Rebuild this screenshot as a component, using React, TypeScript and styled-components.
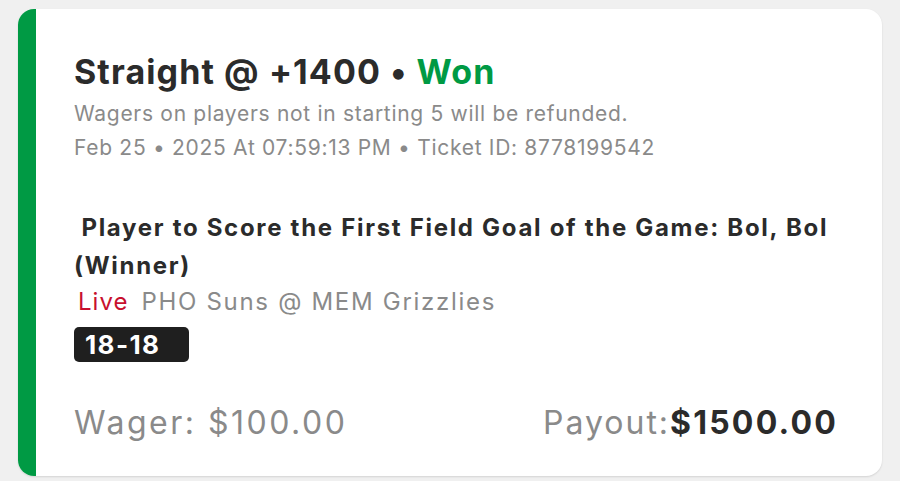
import React from "react";
import styled, { createGlobalStyle } from "styled-components";

const GlobalStyle = createGlobalStyle`
  html, body {
    margin: 0;
    padding: 0;
    background: #f0f0f0;
  }
  body {
    font-family: Inter, Roboto, "Liberation Sans", sans-serif;
  }
`;

const Page = styled.div`
  width: 900px;
  height: 481px;
  box-sizing: border-box;
  padding: 9px 18px 5px 18px;
  display: flex;
`;

const Card = styled.div`
  flex: 1;
  display: flex;
  background: #fff;
  border-radius: 16px;
  overflow: hidden;
  box-shadow: 0 1px 2px rgba(0, 0, 0, 0.12);
`;

const Stripe = styled.div`
  width: 18px;
  background: #009a44;
  flex-shrink: 0;
`;

const Body = styled.div`
  flex: 1;
  display: flex;
  flex-direction: column;
  padding: 43px 46px 0 38px;
`;

const Title = styled.h1`
  margin: 0;
  font-size: 34px;
  line-height: 40px;
  font-weight: 700;
  letter-spacing: 1.1px;
  color: #2b2b2b;
`;

const Won = styled.span`
  color: #009a44;
`;

const Meta = styled.div<{ $gap?: number }>`
  margin-top: ${(p) => p.$gap ?? 0}px;
  font-size: 21px;
  line-height: 34px;
  letter-spacing: 0.7px;
  color: #8a8a8a;
`;

const Market = styled.div`
  margin-top: 44px;
  font-size: 24px;
  line-height: 38px;
  font-weight: 700;
  letter-spacing: 1.7px;
  color: #2b2b2b;
  white-space: pre-wrap;
`;

const Event = styled.div`
  font-size: 24px;
  line-height: 34px;
  letter-spacing: 1.7px;
  color: #8a8a8a;
  padding-left: 4px;
`;

const LiveTag = styled.span`
  color: #c8102e;
  letter-spacing: 1px;
  margin-right: 13px;
`;

const Score = styled.div`
  align-self: flex-start;
  margin-top: 8px;
  width: 115px;
  height: 35px;
  box-sizing: border-box;
  padding: 0 11px;
  border-radius: 5px;
  background: #1f1f1f;
  color: #fff;
  font-size: 26px;
  font-weight: 700;
  letter-spacing: 1.4px;
  line-height: 35px;
`;

const Footer = styled.div`
  margin-top: 41px;
  display: flex;
  justify-content: space-between;
  align-items: baseline;
  font-size: 32px;
  line-height: 40px;
  letter-spacing: 2.5px;
  color: #8a8a8a;
`;

const Payout = styled.span`
  letter-spacing: 2px;
`;

const Amount = styled.span`
  font-weight: 700;
  letter-spacing: 2.2px;
  margin-right: -2px;
  color: #2b2b2b;
`;

export default function App() {
  return (
    <>
      <GlobalStyle />
      <Page>
        <Card>
          <Stripe />
          <Body>
            <Title>
              Straight @ +1400 • <Won>Won</Won>
            </Title>
            <Meta $gap={5}>Wagers on players not in starting 5 will be refunded.</Meta>
            <Meta>Feb 25 • 2025 At 07:59:13 PM • Ticket ID: 8778199542</Meta>
            <Market>
              {" Player to Score the First Field Goal of the Game: Bol, Bol (Winner)"}
            </Market>
            <Event>
              <LiveTag>Live</LiveTag>PHO Suns @ MEM Grizzlies
            </Event>
            <Score>18-18</Score>
            <Footer>
              <span>Wager: $100.00</span>
              <Payout>
                Payout:<Amount>$1500.00</Amount>
              </Payout>
            </Footer>
          </Body>
        </Card>
      </Page>
    </>
  );
}
